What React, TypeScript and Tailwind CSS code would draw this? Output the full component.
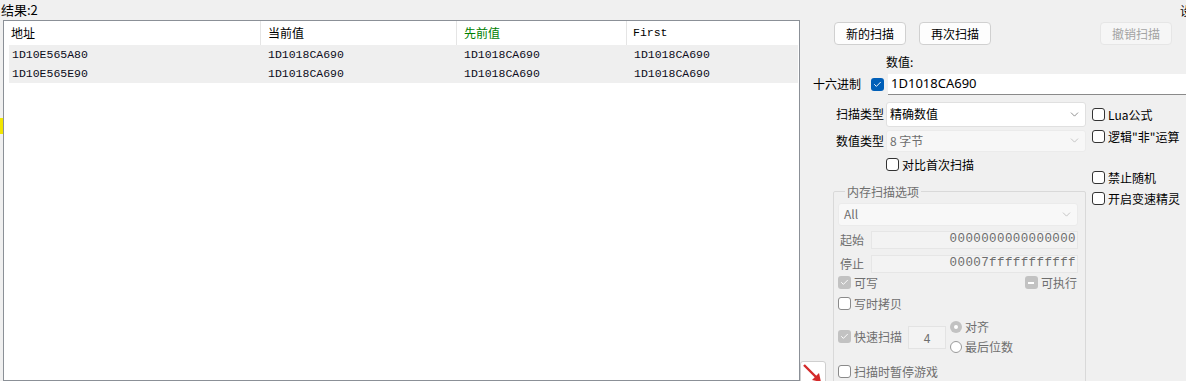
import { Check, ChevronDown } from "lucide-react";

const cjk = "font-['Microsoft_YaHei','Noto_Sans_CJK_SC',sans-serif]";
const mono = "font-['Liberation_Mono','Courier_New',monospace]";

const rows = [
  ["1D10E565A80", "1D1018CA690", "1D1018CA690", "1D1018CA690"],
  ["1D10E565E90", "1D1018CA690", "1D1018CA690", "1D1018CA690"],
];

function Box({
  state = "off",
  tone = "normal",
}: {
  state?: "on" | "off" | "mixed";
  tone?: "normal" | "blue" | "dim";
}) {
  if (state === "off") {
    return (
      <span
        className={`inline-block h-[13px] w-[13px] shrink-0 rounded-[3px] border bg-white ${
          tone === "dim" ? "border-[#8a8a8a]" : "border-[#333]"
        }`}
      />
    );
  }
  const bg = tone === "blue" ? "bg-[#005fb8]" : "bg-[#c2c2c2]";
  return (
    <span className={`flex h-[13px] w-[13px] shrink-0 items-center justify-center rounded-[3px] ${bg}`}>
      {state === "on" ? (
        <Check size={9} strokeWidth={2.5} className="text-white" />
      ) : (
        <span className="h-[2px] w-[6px] bg-white" />
      )}
    </span>
  );
}

function CheckRow({
  label,
  state,
  tone,
  dim,
}: {
  label: string;
  state?: "on" | "off" | "mixed";
  tone?: "normal" | "blue" | "dim";
  dim?: boolean;
}) {
  return (
    <div className={`flex h-[14px] items-center gap-[3px] text-[12px] ${dim ? "text-[#6e6e6e]" : "text-black"}`}>
      <Box state={state} tone={tone} />
      <span className="leading-[14px]">{label}</span>
    </div>
  );
}

function Radio({ on, label }: { on?: boolean; label: string }) {
  return (
    <div className="flex h-[13px] items-center gap-[3px] text-[12px] text-[#6e6e6e]">
      {on ? (
        <span className="flex h-[12px] w-[12px] items-center justify-center rounded-full bg-[#c2c2c2]">
          <span className="h-[4px] w-[4px] rounded-full bg-white" />
        </span>
      ) : (
        <span className="h-[12px] w-[12px] rounded-full border border-[#9a9a9a] bg-white" />
      )}
      <span>{label}</span>
    </div>
  );
}

function Btn({ label, disabled }: { label: string; disabled?: boolean }) {
  return (
    <button
      className={`h-[23px] w-[72px] rounded-[4px] border text-[12px] ${
        disabled
          ? "border-[#e6e6e6] bg-[#f6f6f6] text-[#a3a3a3]"
          : "border-[#d0d0d0] bg-[#fdfdfd] text-black"
      }`}
    >
      {label}
    </button>
  );
}

export default function App() {
  return (
    <div className={`relative flex h-[381px] w-[1186px] overflow-hidden bg-[#f0f0f0] ${cjk}`}>
      {/* results list */}
      <div className="flex w-[800px] flex-col">
        <div className="h-[20px] pl-[1px] pt-[2px] text-[13px] leading-[16px] text-black">结果:2</div>
        <div className="flex flex-1">
          <div className="w-[3px] pt-[98px]">
            <div className="h-[16px] w-[3px] bg-[#f2e600]" />
          </div>
          <div className="flex-1 border border-[#8b9097] bg-white pl-[5px] pr-[1px]">
            <div className="flex h-[24px] items-center bg-white text-[12px]">
              <div className="w-[251px] pl-[2px]">地址</div>
              <div className="h-full w-px bg-[#e5e5e5]" />
              <div className="w-[195px] pl-[7px]">当前值</div>
              <div className="h-full w-px bg-[#e5e5e5]" />
              <div className="w-[169px] pl-[7px] text-[#008000]">先前值</div>
              <div className="h-full w-px bg-[#e5e5e5]" />
              <div className={`flex-1 pl-[6px] text-[11.5px] ${mono}`}>First</div>
            </div>
            {rows.map((r) => (
              <div key={r[0]} className={`flex h-[19px] items-center bg-[#efefef] text-[11.5px] text-[#0c0c20] ${mono}`}>
                <div className="w-[252px] pl-[3px]">{r[0]}</div>
                <div className="w-[196px] pl-[7px]">{r[1]}</div>
                <div className="w-[170px] pl-[7px]">{r[2]}</div>
                <div className="flex-1 pl-[7px]">{r[3]}</div>
              </div>
            ))}
          </div>
        </div>
      </div>

      {/* scan panel */}
      <div className="flex flex-1 flex-col">
        <div className="flex pl-[34px] pr-[14px] pt-[22px]">
          <Btn label="新的扫描" />
          <div className="w-[13px]" />
          <Btn label="再次扫描" />
          <div className="flex-1" />
          <Btn label="撤销扫描" disabled />
        </div>
        <div className="mt-[9px] h-[16px] pl-[86px] text-[12px] leading-[16px]">数值:</div>
        <div className="mt-[4px] flex h-[24px] items-center">
          <span className="ml-[13px] text-[12px]">十六进制</span>
          <span className="ml-[10px]">
            <Box state="on" tone="blue" />
          </span>
          <div className="ml-[4px] flex h-full flex-1 items-center border-b border-[#8a8a8a] bg-white pl-[3px] font-['Noto_Sans',sans-serif] text-[13px]">
            1D1018CA690
          </div>
        </div>

        <div className="mt-[7px] flex">
          {/* main column */}
          <div className="flex w-[286px] flex-col">
            <div className="flex h-[25px] items-center">
              <span className="w-[86px] pr-[2px] text-right text-[12px]">扫描类型</span>
              <div className="flex h-full flex-1 items-center justify-between rounded-[3px] border border-[#e0e0e0] bg-white pl-[3px] pr-[4px] text-[12px]">
                精确数值
                <ChevronDown size={13} strokeWidth={1.2} className="text-[#555]" />
              </div>
            </div>
            <div className="mt-[3px] flex h-[22px] items-center">
              <span className="w-[86px] pr-[2px] text-right text-[12px]">数值类型</span>
              <div className="flex h-full flex-1 items-center justify-between rounded-[3px] border border-[#ebebeb] bg-[#f7f7f7] pl-[3px] pr-[4px] text-[12px] text-[#6e6e6e]">
                8 字节
                <ChevronDown size={13} strokeWidth={1.2} className="text-[#aaa]" />
              </div>
            </div>
            <div className="mt-[6px] pl-[86px]">
              <CheckRow label="对比首次扫描" />
            </div>

            <div className="mt-[13px] flex">
              <div className="w-[33px] pt-[176px]">
                <div className="h-[30px] w-[26px] overflow-hidden rounded-[3px] border border-[#cfcfcf] bg-white">
                  <svg width="26" height="30" viewBox="0 0 26 30">
                    <line x1="3" y1="3" x2="16" y2="16" stroke="#d42a2a" strokeWidth="2.4" />
                    <polygon points="20,20 11,18 18,11" fill="#d42a2a" />
                  </svg>
                </div>
              </div>
              <fieldset className="w-[253px] rounded-[2px] border border-[#d9d9d9] pl-[4px] pr-[7px] pb-[10px]">
                <legend className="ml-[7px] px-[2px] text-[12px] leading-[14px] text-[#6e6e6e]">内存扫描选项</legend>
                <div className="mt-[4px] flex h-[23px] items-center justify-between rounded-[3px] border border-[#ebebeb] bg-[#f8f8f8] pl-[5px] pr-[4px] text-[12px] text-[#6e6e6e]">
                  All
                  <ChevronDown size={13} strokeWidth={1.2} className="text-[#aaa]" />
                </div>
                <div className="mt-[5px] flex h-[18px] items-center">
                  <span className="w-[33px] pl-[2px] text-[12px] text-[#6e6e6e]">起始</span>
                  <div className={`flex h-full flex-1 items-center justify-end border border-[#e6e6e6] bg-[#f3f3f3] pr-[1px] text-[12.5px] tracking-[0.4px] text-[#6e6e6e] ${mono}`}>
                    0000000000000000
                  </div>
                </div>
                <div className="mt-[6px] flex h-[18px] items-center">
                  <span className="w-[33px] pl-[2px] text-[12px] text-[#6e6e6e]">停止</span>
                  <div className={`flex h-full flex-1 items-center justify-end border border-[#e6e6e6] bg-[#f3f3f3] pr-[1px] text-[12.5px] tracking-[0.4px] text-[#6e6e6e] ${mono}`}>
                    00007fffffffffff
                  </div>
                </div>
                <div className="mt-[3px] flex items-center justify-between pr-[1px]">
                  <CheckRow label="可写" state="on" dim />
                  <CheckRow label="可执行" state="mixed" dim />
                </div>
                <div className="mt-[7px]">
                  <CheckRow label="写时拷贝" tone="dim" dim />
                </div>
                <div className="mt-[9px] flex h-[34px] items-center">
                  <CheckRow label="快速扫描" state="on" dim />
                  <div className="ml-[6px] mt-[2px] flex h-[23px] w-[38px] items-center justify-center border border-[#e3e3e3] bg-[#f3f3f3] text-[12px] text-[#6e6e6e]">
                    4
                  </div>
                  <div className="ml-[4px] flex flex-col gap-[7px]">
                    <Radio on label="对齐" />
                    <Radio label="最后位数" />
                  </div>
                </div>
                <div className="mt-[11px]">
                  <CheckRow label="扫描时暂停游戏" tone="dim" dim />
                </div>
              </fieldset>
            </div>
          </div>

          {/* side column */}
          <div className="ml-[6px] flex flex-col">
            <div className="mt-[6px]">
              <CheckRow label="Lua公式" />
            </div>
            <div className="mt-[8px]">
              <CheckRow label={'逻辑"非"运算'} />
            </div>
            <div className="mt-[27px]">
              <CheckRow label="禁止随机" />
            </div>
            <div className="mt-[7px]">
              <CheckRow label="开启变速精灵" />
            </div>
          </div>
        </div>
      </div>

      <span className="absolute right-[-6px] top-[4px] text-[12px] leading-[14px]">设</span>
    </div>
  );
}
